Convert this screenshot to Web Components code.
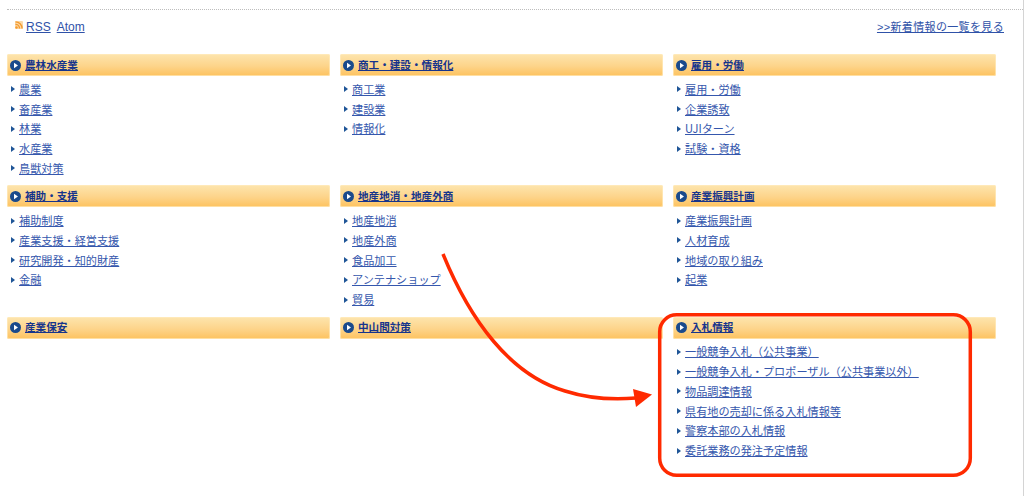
<!DOCTYPE html>
<html lang="ja">
<head>
<meta charset="utf-8">
<title>新着情報</title>
<style>
    html, body { margin: 0; background: #fff; }
    body { font-family: "Liberation Sans", "Noto Sans CJK JP", sans-serif; }
</style>
</head>
<body>
<info-page>
    <feed-bar slot="feeds" more=">>新着情報の一覧を見る"></feed-bar>
    <cat-card title="農林水産業" items="農業|畜産業|林業|水産業|鳥獣対策"></cat-card>
    <cat-card title="商工・建設・情報化" items="商工業|建設業|情報化"></cat-card>
    <cat-card title="雇用・労働" items="雇用・労働|企業誘致|UJIターン|試験・資格"></cat-card>
    <cat-card title="補助・支援" items="補助制度|産業支援・経営支援|研究開発・知的財産|金融"></cat-card>
    <cat-card title="地産地消・地産外商" items="地産地消|地産外商|食品加工|アンテナショップ|貿易"></cat-card>
    <cat-card title="産業振興計画" items="産業振興計画|人材育成|地域の取り組み|起業"></cat-card>
    <cat-card title="産業保安" items=""></cat-card>
    <cat-card title="中山間対策" items=""></cat-card>
    <cat-card title="入札情報" items="一般競争入札（公共事業）|一般競争入札・プロポーザル（公共事業以外）|物品調達情報|県有地の売却に係る入札情報等|警察本部の入札情報|委託業務の発注予定情報"></cat-card>
    <red-callout slot="overlay"></red-callout>
</info-page>

<script>
// Page frame: dashed rule on top, grey edge on the right
class InfoPage extends HTMLElement {
    constructor() {
        super();
        this.attachShadow({ mode: 'open' });
        this.shadowRoot.innerHTML = /*html*/`
            <style>
                :host {
                    display: block;
                    position: relative;
                    box-sizing: border-box;
                    height: 496px;
                    padding-top: 9px;
                    border-right: 1px solid #d4d4d4;
                    overflow: hidden;
                }
                .rule {
                    margin-left: 7px;
                    border-top: 1px dotted #bdbdbd;
                }
                .grid {
                    display: grid;
                    grid-template-columns: repeat(3, 323px);
                    column-gap: 10px;
                    row-gap: 6.5px;
                    align-items: start;
                    padding-left: 7px;
                }
            </style>
            <div class="rule"></div>
            <slot name="feeds"></slot>
            <div class="grid"><slot></slot></div>
            <slot name="overlay"></slot>
        `;
    }
}

// RSS / Atom links and the link to the full list
class FeedBar extends HTMLElement {
    constructor() {
        super();
        this.attachShadow({ mode: 'open' });
        this.shadowRoot.innerHTML = /*html*/`
            <style>
                :host {
                    display: flex;
                    justify-content: space-between;
                    align-items: center;
                    box-sizing: border-box;
                    height: 44px;
                    padding: 0 19px 10px 15px;
                    font-family: "Liberation Sans", "Noto Sans CJK JP", sans-serif;
                }
                a { color: #2f52a8; text-decoration: underline; }
                .left { display: flex; align-items: center; font-size: 12px; }
                .left a { margin-right: 6px; }
                svg { margin-right: 3px; margin-top: -4px; }
                .more { font-size: 11px; letter-spacing: 0.35px; margin-bottom: 2px; }
            </style>
            <div class="left">
                <svg width="8" height="8" viewBox="0 0 8 8">
                    <rect width="8" height="8" rx="1" fill="#fbd9a8"/>
                    <circle cx="1.5" cy="6.5" r="1.2" fill="#f59a2e"/>
                    <path d="M0.5 3.4a4 4 0 0 1 4 4M0.5 0.9a6.6 6.6 0 0 1 6.6 6.6" fill="none" stroke="#f59a2e" stroke-width="1.3"/>
                </svg>
                <a href="#">RSS</a><a href="#">Atom</a>
            </div>
            <a class="more" href="#"></a>
        `;
    }

    connectedCallback() {
        this.shadowRoot.querySelector('.more').textContent = this.getAttribute('more');
    }
}

// One category: orange heading bar and its list of links
class CatCard extends HTMLElement {
    constructor() {
        super();
        this.attachShadow({ mode: 'open' });
        this.shadowRoot.innerHTML = /*html*/`
            <style>
                :host {
                    display: block;
                    font-family: "Noto Sans CJK JP", "Liberation Sans", sans-serif;
                    font-size: 11.15px;
                }
                a { color: #3557ad; text-decoration: underline; }
                .bar {
                    box-sizing: border-box;
                    display: flex;
                    align-items: center;
                    gap: 4px;
                    height: 22px;
                    padding-left: 3px;
                    border-radius: 2px;
                    background: linear-gradient(#fde5ae, #fdd48a 55%, #fdc25f);
                    box-shadow: inset 0 0 0 1px rgba(255, 235, 190, 0.7);
                }
                .bar a { color: #16348c; font-weight: 700; font-size: 10.6px; margin-top: -2px; }
                ul { list-style: none; margin: 0; padding: 3.5px 0 0.5px; }
                ul:empty { display: none; }
                li {
                    display: flex;
                    align-items: center;
                    gap: 4px;
                    height: 19.75px;
                    padding-left: 4px;
                }
                li a { margin-top: -1px; }
            </style>
            <div class="bar">
                <svg width="11" height="11" viewBox="0 0 11 11">
                    <circle cx="5.5" cy="5.5" r="5.5" fill="#1a4a8c"/>
                    <path d="M4 2.8 8 5.5 4 8.2z" fill="#fff"/>
                </svg>
                <a href="#" class="title"></a>
            </div>
            <ul></ul>
        `;
    }

    connectedCallback() {
        this.shadowRoot.querySelector('.title').textContent = this.getAttribute('title');
        const list = this.shadowRoot.querySelector('ul');
        const items = (this.getAttribute('items') || '').split('|').filter(Boolean);
        items.forEach((text) => {
            const li = document.createElement('li');
            li.innerHTML = '<svg width="4" height="6" viewBox="0 0 4 6"><path d="M0 0 4 3 0 6z" fill="#1f5597"/></svg><a href="#"></a>';
            li.querySelector('a').textContent = text;
            list.appendChild(li);
        });
    }
}

// Red annotation drawn over the page: rounded frame and curved arrow
class RedCallout extends HTMLElement {
    constructor() {
        super();
        this.attachShadow({ mode: 'open' });
        this.shadowRoot.innerHTML = /*html*/`
            <style>
                :host { position: absolute; top: 0; left: 0; display: block; pointer-events: none; }
                svg { display: block; }
            </style>
            <svg width="1024" height="496" viewBox="0 0 1024 496">
                <rect x="659.7" y="314.7" width="310.6" height="160.6" rx="17" fill="none" stroke="#ff2a00" stroke-width="3.5"/>
                <path d="M443 254C470 320 510 375 565 391 590 399 612 400 636 398" fill="none" stroke="#ff2a00" stroke-width="3.5"/>
                <path d="M633 389 652 394.500 636 407z" fill="#ff2a00"/>
            </svg>
        `;
    }
}

customElements.define('info-page', InfoPage);
customElements.define('feed-bar', FeedBar);
customElements.define('cat-card', CatCard);
customElements.define('red-callout', RedCallout);
</script>
</body>
</html>
